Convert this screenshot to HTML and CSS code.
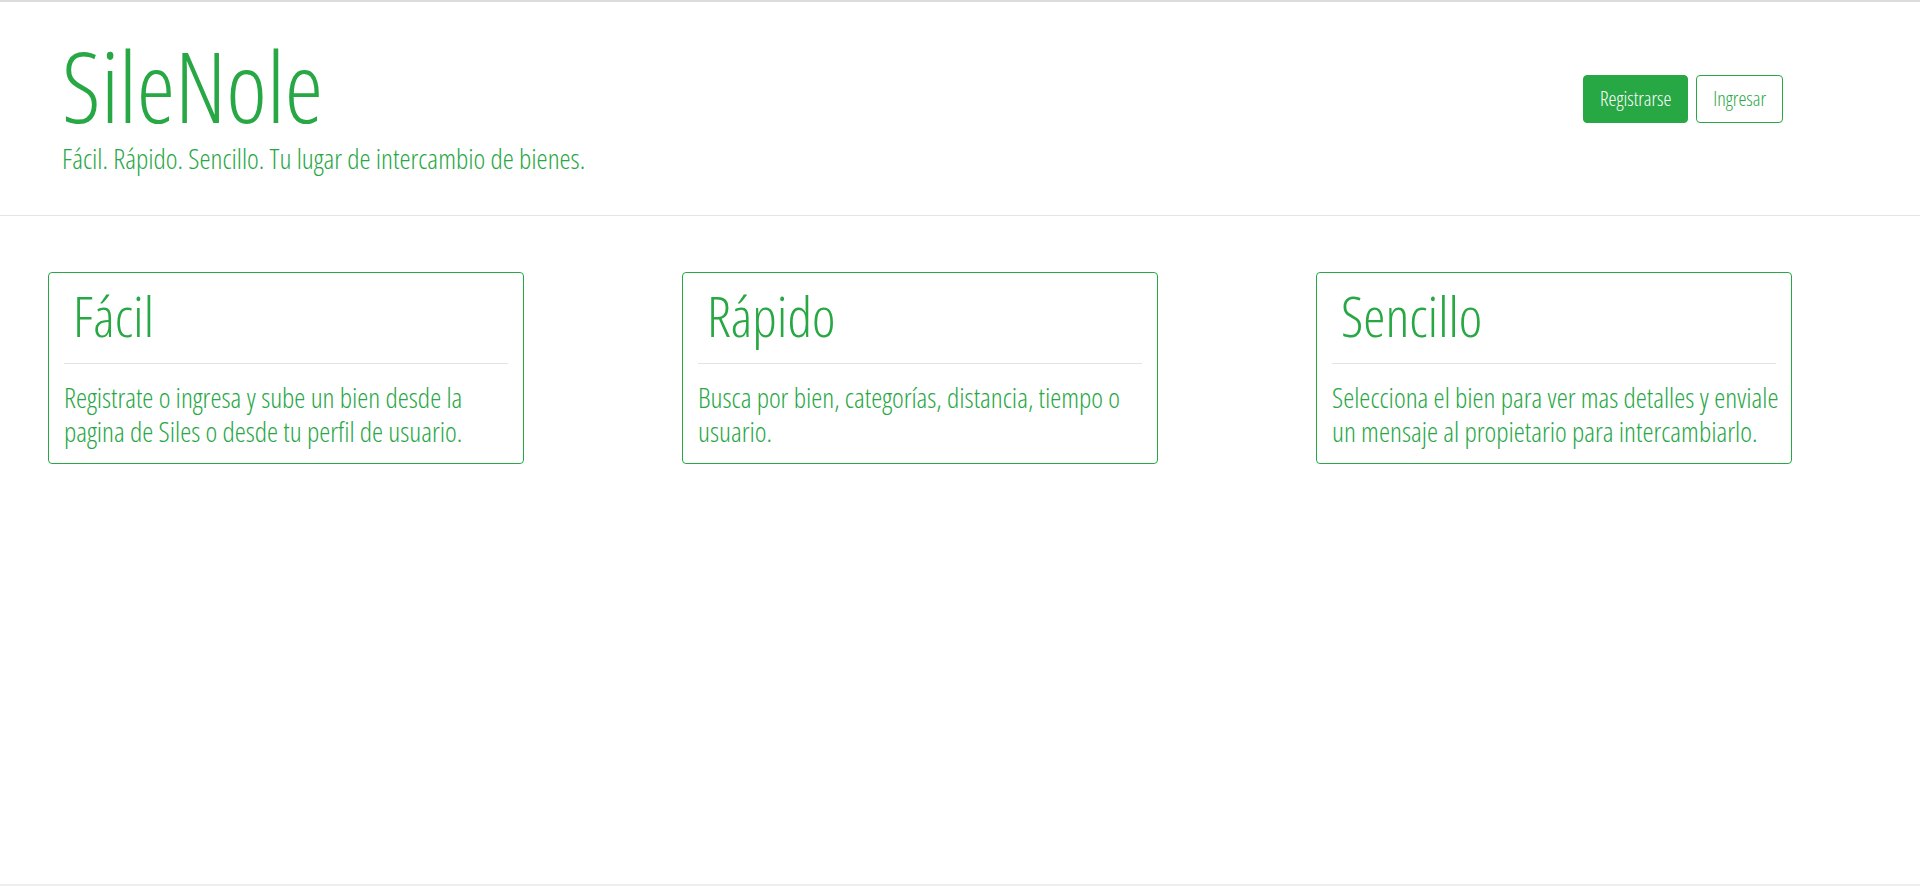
FILE: index.html
```html
<!DOCTYPE html>
<html lang="es">
<head>
<meta charset="utf-8">
<title>SileNole</title>
<link rel="stylesheet" href="styles.css">
</head>
<body>
<header class="site-header">
  <div class="brand">
    <h1 class="brand-title">SileNole</h1>
    <p class="brand-tagline">Fácil. Rápido. Sencillo. Tu lugar de intercambio de bienes.</p>
  </div>
  <nav class="auth">
    <a class="btn btn-solid" href="#">Registrarse</a>
    <a class="btn btn-outline" href="#">Ingresar</a>
  </nav>
</header>
<main class="features">
  <section class="card">
    <h2 class="card-title">Fácil</h2>
    <hr class="card-rule">
    <p class="card-text">Registrate o ingresa y sube un bien desde la pagina de Siles o desde tu perfil de usuario.</p>
  </section>
  <section class="card">
    <h2 class="card-title">Rápido</h2>
    <hr class="card-rule">
    <p class="card-text">Busca por bien, categorías, distancia, tiempo o usuario.</p>
  </section>
  <section class="card">
    <h2 class="card-title">Sencillo</h2>
    <hr class="card-rule">
    <p class="card-text">Selecciona el bien para ver mas detalles y enviale un mensaje al propietario para intercambiarlo.</p>
  </section>
</main>
<footer class="page-foot"></footer>
</body>
</html>
```
FILE: styles.css
```css
html, body {
  margin: 0;
  padding: 0;
}
body {
  height: 100vh;
  box-sizing: border-box;
  display: flex;
  flex-direction: column;
  border-top: 2px solid #dcdcdf;
  background: #fff;
  color: #28a745;
  font-family: "Open Sans", "Liberation Sans", sans-serif;
  font-weight: 300;
  font-stretch: 75%;
}
.site-header {
  display: flex;
  justify-content: space-between;
  align-items: center;
  padding: 35px 137px 39px 62px;
  border-bottom: 1px solid #e5e5e5;
}
.brand-title {
  margin: 0;
  font-size: 97px;
  font-weight: 300;
  line-height: 97px;
}
.brand-tagline {
  margin: 7px 0 0;
  font-size: 28px;
  line-height: 35px;
}
.auth {
  display: flex;
  gap: 8px;
  margin-top: -15px;
}
.btn {
  display: inline-block;
  box-sizing: border-box;
  height: 48px;
  line-height: 46px;
  padding: 0 16px;
  border: 1px solid #28a745;
  border-radius: 4px;
  font-size: 20px;
  text-decoration: none;
}
.btn-solid {
  background: #28a745;
  color: #fff;
}
.btn-outline {
  background: #fff;
  color: #28a745;
}
.features {
  flex: 1;
  display: grid;
  grid-template-columns: repeat(3, 476px);
  column-gap: 158px;
  align-items: start;
  padding: 56px 0 0 48px;
}
.card {
  border: 1px solid #28a745;
  border-radius: 4px;
  padding: 9px 6px 15px 15px;
}
.card-title {
  margin: 0;
  padding-left: 9px;
  font-size: 56px;
  font-weight: 300;
  line-height: 66px;
}
.card-rule {
  margin: 15px 9px 16px 0;
  border: 0;
  border-top: 1px solid #e3e3e3;
}
.card-text {
  margin: 0;
  font-size: 28px;
  line-height: 34px;
}
.page-foot {
  height: 0;
  border-top: 2px solid #eeeeee;
}
```
